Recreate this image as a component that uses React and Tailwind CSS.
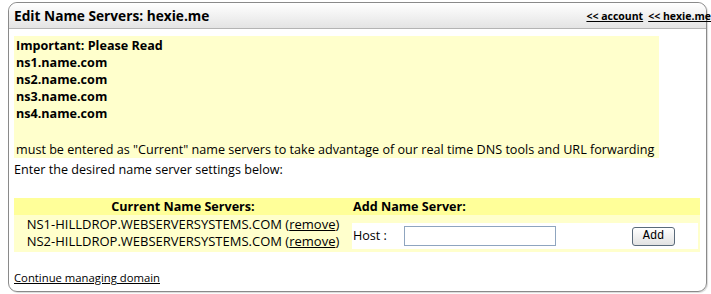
export default function App() {
  const servers = [
    "NS1-HILLDROP.WEBSERVERSYSTEMS.COM",
    "NS2-HILLDROP.WEBSERVERSYSTEMS.COM"
  ];

  return (
    <div className="w-[711px] h-[294px] bg-white pt-[2px] pl-[8px] font-['Open_Sans',sans-serif] text-[12.6px] text-black">
      {/* Panel */}
      <div className="w-[699px] h-[290px] border border-[#8a8a8a] rounded-[9px] shadow-[1px_1px_1px_rgba(0,0,0,0.15)]">
        {/* Header */}
        <div className="h-[26px] flex items-center justify-between pl-[5px] rounded-t-[9px] border-b border-[#b4b4b4] bg-gradient-to-b from-white to-[#e4e4e4]">
          <h2 className="text-[13.7px] font-bold leading-none">Edit Name Servers: hexie.me</h2>
          <div className="flex gap-[5px] text-[10.5px] font-bold mr-[-5px] mt-[2px]">
            <a className="underline">&lt;&lt; account</a>
            <a className="underline">&lt;&lt; hexie.me</a>
          </div>
        </div>

        <div className="px-[5px]">
          {/* Notice */}
          <div className="mt-[7px] w-[645px] h-[122px] bg-[#ffffcc] px-[2px] pt-[1px] leading-[17px]">
            <p className="font-bold">Important: Please Read</p>
            <p className="font-bold">ns1.name.com</p>
            <p className="font-bold">ns2.name.com</p>
            <p className="font-bold">ns3.name.com</p>
            <p className="font-bold">ns4.name.com</p>
            <p className="mt-[19px] whitespace-nowrap">
              must be entered as "Current" name servers to take advantage of our real time DNS tools and URL forwarding
            </p>
          </div>

          <p className="leading-[17px] mt-[3px]">Enter the desired name server settings below:</p>

          {/* Name server table */}
          <div className="mt-[20px] w-[686px]">
            <div className="flex h-[17px] bg-[#ffff99] font-bold leading-[17px]">
              <div className="w-[338px] text-center">Current Name Servers:</div>
              <div className="pl-[1px]">Add Name Server:</div>
            </div>
            <div className="flex bg-[#ffffcc] h-[37px]">
              <div className="w-[338px] text-center leading-[17px] pt-[1px] text-[13px] whitespace-nowrap">
                {servers.map((s) => (
                  <div key={s}>
                    {s} (<a className="underline">remove</a>)
                  </div>
                ))}
              </div>
              <div className="flex-1 flex items-center bg-white mt-[8px] mb-[3px] mr-[2px] h-[26px]">
                <span className="w-[52px] pl-[1px]">Host :</span>
                <input
                  type="text"
                  className="w-[152px] h-[20px] border border-[#8fa5bf] bg-white"
                />
                <button className="ml-[76px] w-[43px] h-[19px] border border-[#5a6a7a] rounded-[3px] bg-gradient-to-b from-white to-[#e2e2e2] font-['Liberation_Mono',monospace] text-[12px] leading-none">
                  Add
                </button>
              </div>
            </div>
          </div>

          <a className="block mt-[19px] text-[11.3px] underline leading-[14px]">Continue managing domain</a>
        </div>
      </div>
    </div>
  );
}
